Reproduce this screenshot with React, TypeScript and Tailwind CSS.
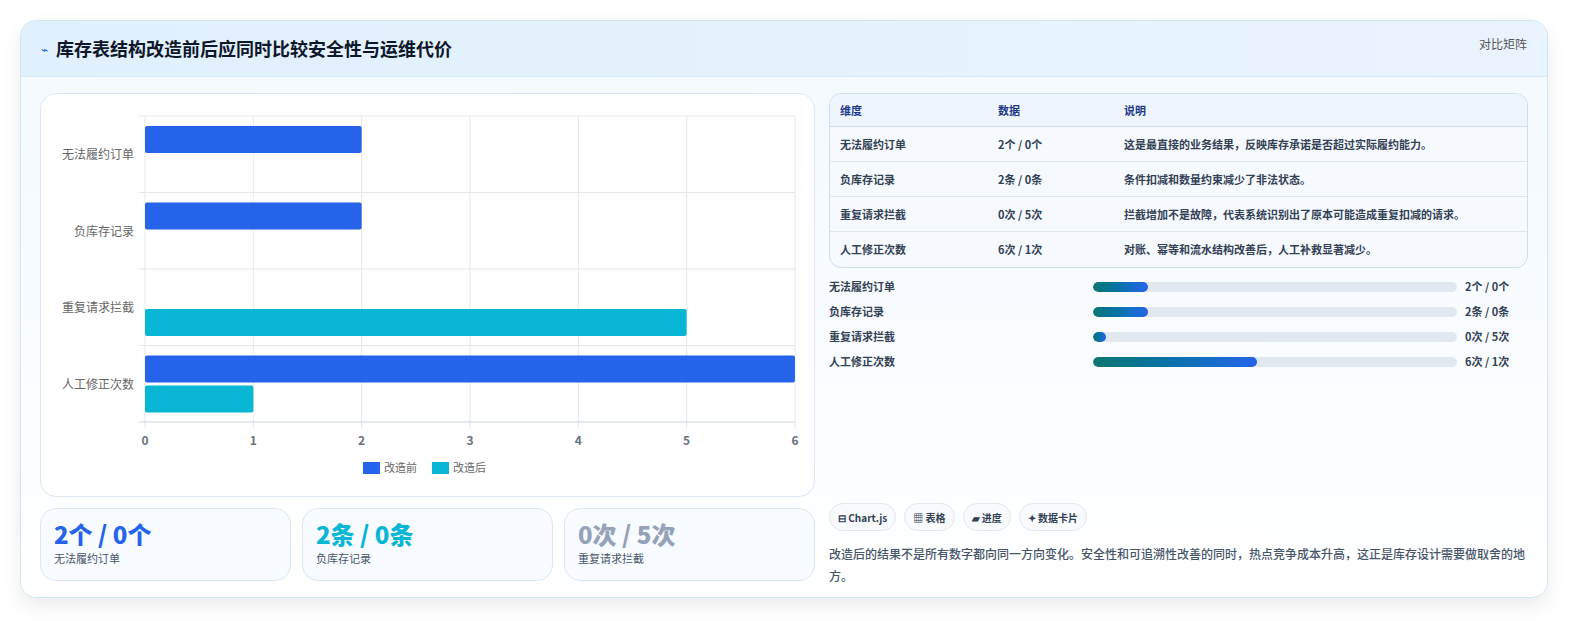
const rows = [
  { n: "无法履约订单", d: "2个 / 0个", t: "这是最直接的业务结果，反映库存承诺是否超过实际履约能力。", b: 2, a: 0, w: 15 },
  { n: "负库存记录", d: "2条 / 0条", t: "条件扣减和数量约束减少了非法状态。", b: 2, a: 0, w: 15 },
  { n: "重复请求拦截", d: "0次 / 5次", t: "拦截增加不是故障，代表系统识别出了原本可能造成重复扣减的请求。", b: 0, a: 5, w: 3.5 },
  { n: "人工修正次数", d: "6次 / 1次", t: "对账、幂等和流水结构改善后，人工补救显著减少。", b: 6, a: 1, w: 45 },
];

function Chart() {
  const x0 = 104, unit = 108.33, y0 = 22, rh = 76.5;
  return (
    <svg width="774" height="403" className="block">
      {[0, 1, 2, 3, 4, 5, 6].map((i) => (
        <line key={i} x1={x0 + i * unit} x2={x0 + i * unit} y1={y0} y2={y0 + rh * 4 + 6} stroke="#e5e7eb" />
      ))}
      {[0, 1, 2, 3].map((i) => (
        <line key={i} x1={x0 - 6} x2={x0 + 6 * unit} y1={y0 + i * rh} y2={y0 + i * rh} stroke="#e5e7eb" />
      ))}
      <line x1={x0 - 6} x2={x0 + 6 * unit} y1={y0 + rh * 4} y2={y0 + rh * 4} stroke="#cbd5e1" />
      {rows.map((r, i) => (
        <g key={i}>
          <text x={93} y={y0 + i * rh + 43} textAnchor="end" fontSize="12" fill="#666">{r.n}</text>
          {r.b > 0 && <rect x={x0} y={y0 + i * rh + 10} width={r.b * unit} height={27} rx={2} fill="#2563eb" />}
          {r.a > 0 && <rect x={x0} y={y0 + i * rh + 40} width={r.a * unit} height={27} rx={2} fill="#06b6d4" />}
        </g>
      ))}
      {[0, 1, 2, 3, 4, 5, 6].map((i) => (
        <text key={i} x={x0 + i * unit} y={351} textAnchor="middle" fontSize="12" fontWeight="600" fill="#6b7280">{i}</text>
      ))}
      <rect x={322} y={368} width={17} height={12} fill="#2563eb" />
      <text x={343} y={378} fontSize="11" fill="#666">改造前</text>
      <rect x={391} y={368} width={17} height={12} fill="#06b6d4" />
      <text x={412} y={378} fontSize="11" fill="#666">改造后</text>
    </svg>
  );
}

export default function App() {
  return (
    <div className="w-[1570px] h-[621px] bg-white pt-[20px] pl-[20px]" style={{ fontFamily: '"Noto Sans CJK SC","Noto Sans",sans-serif' }}>
      <div className="w-[1528px] h-[578px] rounded-2xl border border-[#cfe6f3] bg-gradient-to-b from-[#f3f9ff] to-white shadow-[0_8px_20px_rgba(0,0,0,0.08)] overflow-hidden flex flex-col">
        <div className="h-[56px] bg-gradient-to-r from-[#e0f0fd] to-[#eaf4fe] border-b border-[#d7e8f6] flex items-center justify-between px-[20px]">
          <div className="flex items-center gap-[8px]">
            <span className="text-[#2563eb] text-[12px]">⌁</span>
            <span className="text-[18px] font-bold text-[#0f172a]">库存表结构改造前后应同时比较安全性与运维代价</span>
          </div>
          <span className="text-[12px] text-[#555] -mt-[10px]">对比矩阵</span>
        </div>
        <div className="flex gap-[14px] px-[19px] pt-[16px]">
          <div className="w-[775px] flex flex-col gap-[11px]">
            <div className="h-[404px] rounded-2xl border border-[#dbe7f3] bg-white overflow-hidden"><Chart /></div>
            <div className="flex gap-[11px]">
              {[
                ["2个 / 0个", "text-[#2563eb]", "无法履约订单"],
                ["2条 / 0条", "text-[#06b6d4]", "负库存记录"],
                ["0次 / 5次", "text-[#94a3b8]", "重复请求拦截"],
              ].map(([v, c, l]) => (
                <div key={l} className="flex-1 h-[73px] rounded-2xl border border-[#dbe7f3] bg-[#f8fbff] px-[13px] pt-[9px]">
                  <div className={`text-[24px] font-extrabold leading-[32px] ${c}`}>{v}</div>
                  <div className="text-[11px] text-[#475569] leading-[16px]">{l}</div>
                </div>
              ))}
            </div>
          </div>
          <div className="flex-1 flex flex-col">
            <div className="rounded-xl border border-[#cfdeec] overflow-hidden bg-[#f6faff] text-[11px] font-semibold text-[#334155]">
              <div className="flex h-[33px] items-center bg-[#eef5fd] border-b border-[#cfdeec] text-[#1e3a8a]">
                <div className="w-[168px] pl-[10px]">维度</div><div className="w-[126px]">数据</div><div>说明</div>
              </div>
              {rows.map((r, i) => (
                <div key={i} className={`flex h-[35px] items-center ${i < 3 ? "border-b border-[#dde7f1]" : ""}`}>
                  <div className="w-[168px] pl-[10px]">{r.n}</div><div className="w-[126px]">{r.d}</div><div>{r.t}</div>
                </div>
              ))}
            </div>
            <div className="mt-[9px] flex flex-col gap-[6px] text-[11px] font-semibold text-[#334155]">
              {rows.map((r, i) => (
                <div key={i} className="flex items-center h-[19px]">
                  <div className="w-[264px]">{r.n}</div>
                  <div className="w-[364px] h-[10px] rounded-full bg-[#e2e8f0] overflow-hidden">
                    <div className="h-full rounded-full bg-gradient-to-r from-[#0f766e] to-[#2563eb]" style={{ width: `${r.w}%` }} />
                  </div>
                  <div className="ml-[8px]">{r.d}</div>
                </div>
              ))}
            </div>
            <div className="mt-[132px] flex gap-[8px] text-[10px] font-semibold text-[#334155]">
              {["⊟ Chart.js", "▦ 表格", "▰ 进度", "✦ 数据卡片"].map((c) => (
                <div key={c} className="h-[28px] px-[8px] rounded-full border border-[#e2e8f0] bg-[#f8fafc] flex items-center">{c}</div>
              ))}
            </div>
            <p className="mt-[12px] text-[12px] leading-[22px] text-[#475569] font-medium">改造后的结果不是所有数字都向同一方向变化。安全性和可追溯性改善的同时，热点竞争成本升高，这正是库存设计需要做取舍的地方。</p>
          </div>
        </div>
      </div>
    </div>
  );
}
